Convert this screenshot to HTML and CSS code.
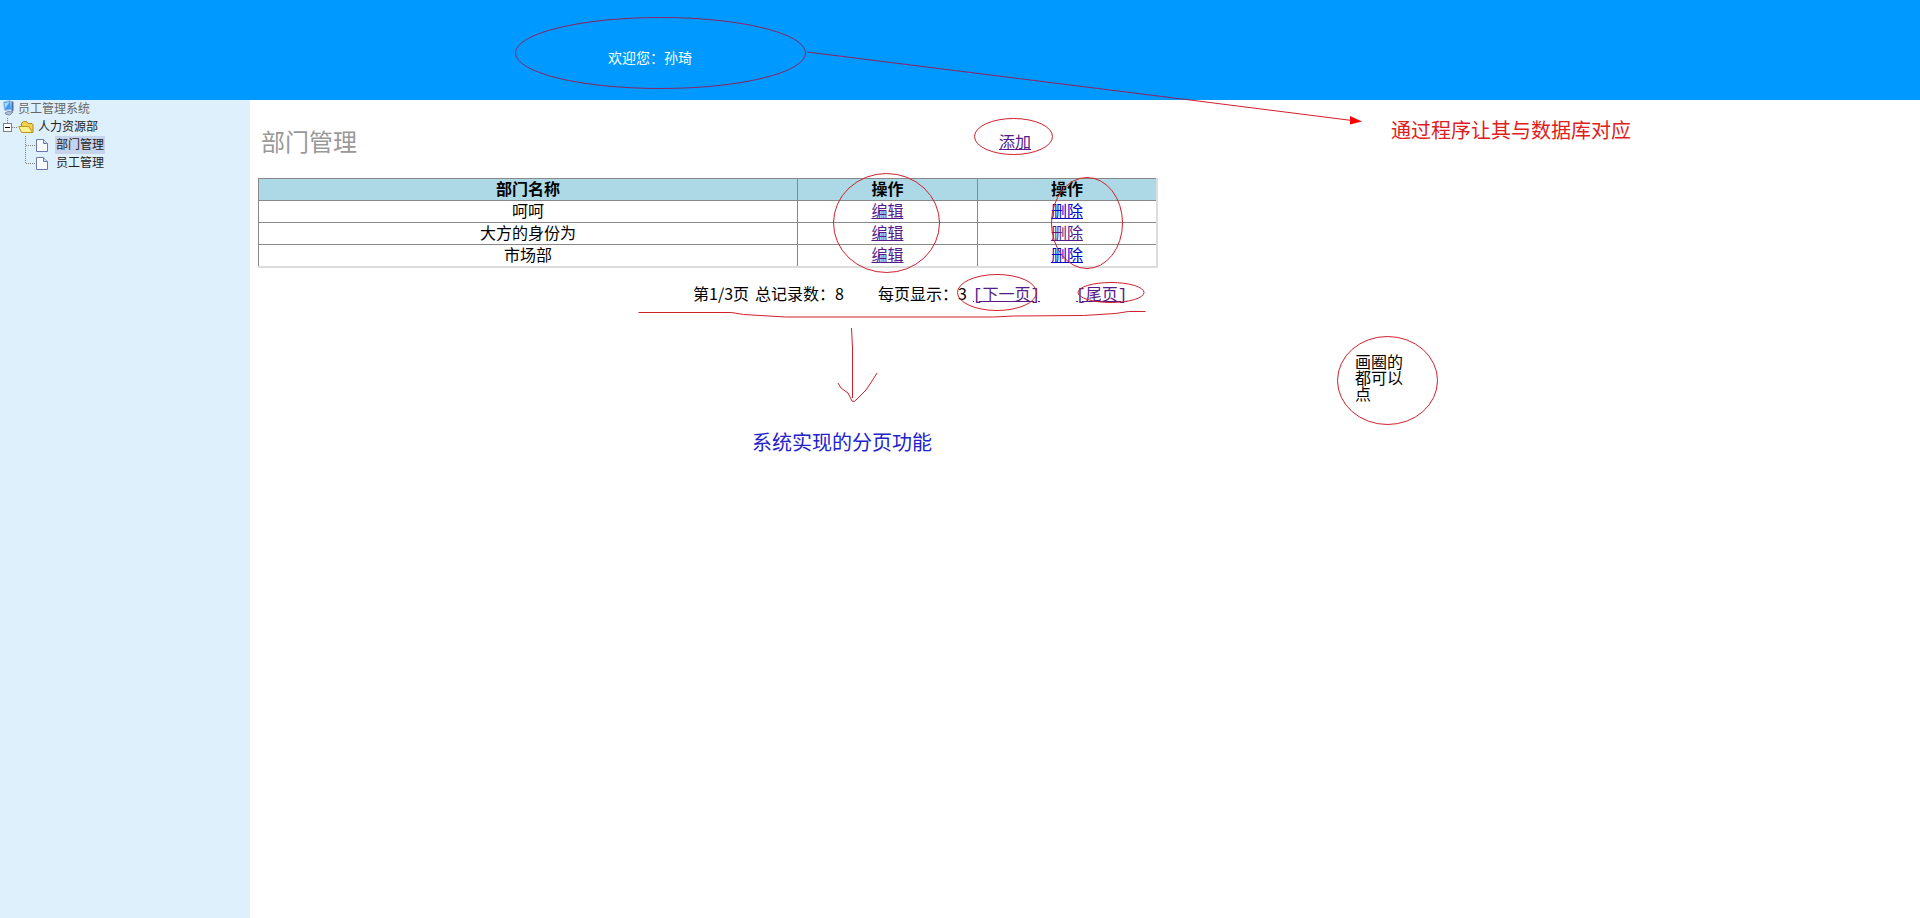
FILE: index.html
```html
<!DOCTYPE html>
<html lang="zh-CN">

<head>
    <meta charset="UTF-8">
    <meta name="viewport" content="width=device-width, initial-scale=1.0">
    <title>员工管理系统</title>
    <link rel="stylesheet" href="styles.css">
</head>

<body>
    <header class="top">
        <span>欢迎您：孙琦</span>
    </header>
    <div class="main">
        <nav class="left">
            <div class="node root">
                <svg class="ico" width="18" height="18" viewBox="0 0 18 18">
                    <path d="M3.500 2l7-1.500 1 9-7 1z" fill="#3f9bf0" stroke="#a9c4e8"/>
                    <path d="M4.500 3l5-1-4 6z" fill="#a8dcff"/>
                    <path d="M11.500 1l2 1v9l-2 1z" fill="#4c6cab"/>
                    <path d="M5 13l3-1.500 5 .5-3 3-4-.5z" fill="#b4bfd4" stroke="#7f8fb0"/>
                </svg>
                <span>员工管理系统</span>
            </div>
            <div class="node">
                <svg class="line" width="18" height="18" viewBox="0 0 18 18">
                    <path d="M7.500 0v5M12 9.500h6" stroke="#808080" stroke-dasharray="1 1"/>
                    <rect x="3.500" y="5.500" width="8" height="8" fill="#fff" stroke="#808080"/>
                    <path d="M5 9.500h5" stroke="#000"/>
                </svg>
                <svg class="ico" width="18" height="18" viewBox="0 0 18 18">
                    <path d="M3.500 13V5l2-1.500h3l1.500 2h4l1 1v8z" fill="#f3d250" stroke="#b08a1c"/>
                    <path d="M3.500 14.500L.8 8.500h10l3.700 6z" fill="#fff08a" stroke="#b9952a"/>
                </svg>
                <a href="#">人力资源部</a>
            </div>
            <div class="node sub">
                <svg class="line" width="18" height="18" viewBox="0 0 18 18">
                    <path d="M7.500 0v18M8 9.500h10" stroke="#808080" stroke-dasharray="1 1"/>
                </svg>
                <svg class="ico" width="18" height="18" viewBox="0 0 18 18">
                    <path d="M.5 3.500h7l4 4v8h-11z" fill="#fafdff" stroke="#6878ad"/>
                    <path d="M7.500 3.500v4h4" fill="#cfdcf2" stroke="#6878ad"/>
                </svg>
                <a class="on" href="#">部门管理</a>
            </div>
            <div class="node sub">
                <svg class="line" width="18" height="18" viewBox="0 0 18 18">
                    <path d="M7.500 0v10M8 9.500h10" stroke="#808080" stroke-dasharray="1 1"/>
                </svg>
                <svg class="ico" width="18" height="18" viewBox="0 0 18 18">
                    <path d="M.5 3.500h7l4 4v8h-11z" fill="#fafdff" stroke="#6878ad"/>
                    <path d="M7.500 3.500v4h4" fill="#cfdcf2" stroke="#6878ad"/>
                </svg>
                <a href="#">员工管理</a>
            </div>
        </nav>
        <div class="content">
            <div class="title">
                <h1>部门管理</h1>
                <a class="old" href="#">添加</a>
            </div>
            <table class="list">
                <thead>
                    <tr>
                        <th class="name">部门名称</th>
                        <th>操作</th>
                        <th>操作</th>
                    </tr>
                </thead>
                <tbody>
                    <tr>
                        <td>呵呵</td>
                        <td><a class="old" href="#">编辑</a></td>
                        <td><a href="#">删除</a></td>
                    </tr>
                    <tr>
                        <td>大方的身份为</td>
                        <td><a class="old" href="#">编辑</a></td>
                        <td><a class="old" href="#">删除</a></td>
                    </tr>
                    <tr>
                        <td>市场部</td>
                        <td><a class="old" href="#">编辑</a></td>
                        <td><a href="#">删除</a></td>
                    </tr>
                </tbody>
            </table>
            <div class="page">
                <span>第1/3页</span>
                <span>总记录数：8</span>
                <span class="size">每页显示：3</span>
                <a class="old" href="#">[下一页]</a>
                <a class="old last" href="#">[尾页]</a>
            </div>
        </div>
    </div>

    <!-- 批注 -->
    <svg class="marks" width="1920" height="918" viewBox="0 0 1920 918">
        <g fill="none" stroke="#d0202c">
            <ellipse class="dark" cx="660.500" cy="53" rx="145" ry="35.500"/>
            <path class="dark" d="M807 52L1190 100"/>
            <path d="M1190 100L1352 120.500"/>
            <ellipse cx="1013.500" cy="136.500" rx="39" ry="18"/>
            <ellipse cx="886.500" cy="223" rx="53" ry="49.500"/>
            <ellipse cx="1087" cy="223" rx="35.500" ry="45.500"/>
            <ellipse cx="997" cy="292.500" rx="39.500" ry="18"/>
            <ellipse cx="1111" cy="292.500" rx="33" ry="10"/>
            <ellipse cx="1387.500" cy="380.500" rx="50" ry="44"/>
            <path d="M638.500 312.500h93l12 2 42 2.500h208l20-1 70-.5 32-2 13-2h17"/>
            <path d="M851.500 328l1 20v50M838 383l3 5 7 5 4 8q2 2 5-2l9-9 6-9 5-8"/>
        </g>
        <path d="M1350 116l12 5.500-12 3z" fill="#f00"/>
    </svg>
    <p class="note note-db">通过程序让其与数据库对应</p>
    <p class="note note-page">系统实现的分页功能</p>
    <p class="note note-click">画圈的都可以点</p>
</body>

</html>
```

FILE: styles.css
```css
* {
    margin: 0;
    padding: 0;
    box-sizing: border-box;
}

body {
    min-height: 100vh;
    display: flex;
    flex-direction: column;
    position: relative;
    overflow-x: hidden;
    background: #fff;
    color: #000;
    font: 16px/20px "Noto Sans CJK SC", sans-serif;
}

a {
    color: #0000cc;
}

a.old {
    color: #551a8b;
}

.top {
    height: 100px;
    padding: 47px 0 0 608px;
    background: #0099ff;
    color: #fff;
    font-size: 14px;
}

.main {
    flex: 1;
    display: flex;
}

.left {
    width: 250px;
    background: #def0fb;
    font-size: 12px;
    line-height: 16px;
}

.node {
    display: flex;
    height: 18px;
}

.node a {
    margin-left: 2px;
    color: #222;
    text-decoration: none;
}

.node .on {
    padding: 0 1px;
    margin-left: 1px;
    background: #c6d3ec;
}

.root {
    color: #666;
}

.sub {
    padding-left: 18px;
}

.content {
    flex: 1;
    padding: 27px 8px;
}

.title {
    display: flex;
    align-items: center;
    justify-content: space-between;
    max-width: 900px;
    height: 28px;
    padding: 0 127px 0 3px;
}

.title h1 {
    color: #999;
    font-size: 24px;
    font-weight: normal;
}

.list {
    width: 100%;
    max-width: 900px;
    margin-top: 23px;
    border-collapse: collapse;
    table-layout: fixed;
    text-align: center;
}

.list th,
.list td {
    height: 22px;
    padding-bottom: 2px;
    border: 1px solid #888;
    line-height: 19px;
}

.list th {
    background: #add8e6;
}

.list th:last-child,
.list td:last-child {
    border-right: 2px solid #ddd;
}

.list tbody tr:last-child td {
    border-bottom: 2px solid #ddd;
}

.list .name {
    width: 60%;
}

.page {
    display: flex;
    align-items: baseline;
    gap: 6px;
    margin-top: 15px;
    padding-left: 435px;
    white-space: nowrap;
}

.page .size {
    margin-left: 28px;
}

.page a {
    font-family: "Liberation Mono", "Noto Sans CJK SC", monospace;
}

.page .last {
    margin-left: 30px;
}

.marks {
    position: absolute;
    left: 0;
    top: 0;
    pointer-events: none;
}

.marks .dark {
    stroke: #8a2560;
}

.note {
    position: absolute;
    white-space: nowrap;
}

.note-db {
    left: 1391px;
    top: 118px;
    color: #e02020;
    font-size: 20px;
    line-height: 24px;
}

.note-page {
    left: 752px;
    top: 430px;
    color: #2222cc;
    font-size: 20px;
    line-height: 24px;
}

.note-click {
    left: 1355px;
    top: 353px;
    width: 50px;
    line-height: 16px;
    white-space: normal;
}
```
